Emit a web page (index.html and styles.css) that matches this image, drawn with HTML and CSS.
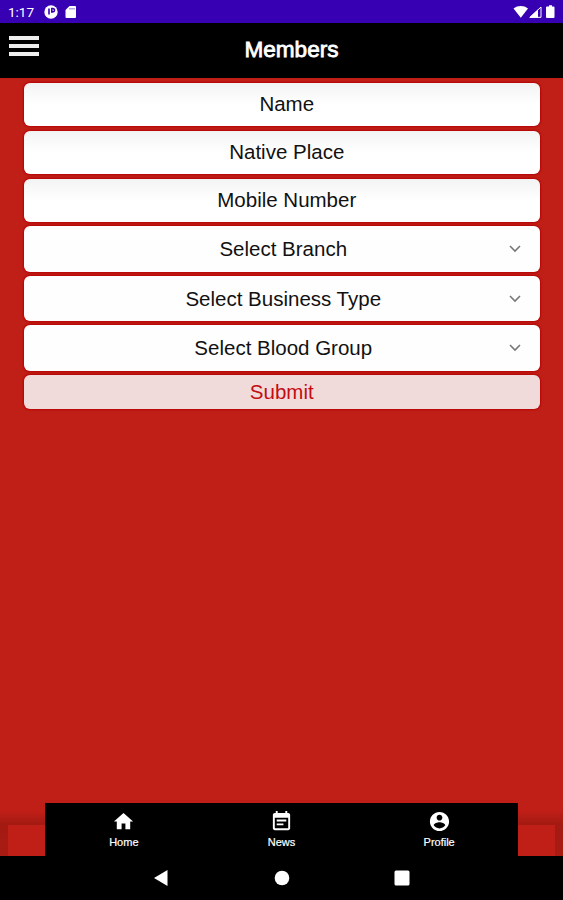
FILE: index.html
```
<!DOCTYPE html>
<html lang="en">

<head>
    <meta charset="UTF-8">
    <meta name="viewport" content="width=device-width, initial-scale=1.0">
    <title>Members</title>
    <link rel="stylesheet" href="styles.css">
</head>

<body>

    <div class="status-bar">
        <span class="clock">1:17</span>
        <svg class="status-app" width="14" height="14" viewBox="0 0 14 14">
            <circle cx="7" cy="7" r="6.7" fill="#fff" />
            <path d="M5 3.500v6M7.800 3.500h1a1.700 1.700 0 0 1 0 3.400h-1z" fill="none" stroke="#3700b3" stroke-width="1.600" />
        </svg>
        <svg class="status-card" width="12" height="14" viewBox="0 0 12 14">
            <path d="M4.500 1H10a1 1 0 0 1 1 1v10a1 1 0 0 1-1 1H1.500a1 1 0 0 1-1-1V5z" fill="#fff" />
            <path d="M5 3v1.500M7 3v1.500M9 3v1.500" stroke="#3700b3" stroke-width=".7" />
        </svg>
        <svg class="status-right" width="44" height="14" viewBox="0 0 44 14">
            <path d="M0.500 3.500C4.500 0.200 11 0.200 15 3.500L7.800 12.800z" fill="#fff" />
            <path d="M25 4.500v8.300H16z" fill="#fff" />
            <path d="M28 2v10.300H17z" fill="none" stroke="#fff" stroke-width="1" />
            <path d="M36 1.500V.3h3v1.200h1.500a1 1 0 0 1 1 1V12a1 1 0 0 1-1 1h-6.500a1 1 0 0 1-1-1V2.500a1 1 0 0 1 1-1z" fill="#fff" />
        </svg>
    </div>

    <header class="header">
        <button class="menu-button" aria-label="Menu">
            <span class="menu-line"></span>
            <span class="menu-line"></span>
            <span class="menu-line"></span>
        </button>
        <h1>Members</h1>
    </header>

    <main class="content">
        <form class="search-form">
            <input type="text" class="field" placeholder="Name">
            <input type="text" class="field" placeholder="Native Place">
            <input type="text" class="field" placeholder="Mobile Number">
            <div class="select">
                Select Branch
                <svg class="chevron" viewBox="0 0 12 8"><path d="M1 1l5 5 5-5" /></svg>
            </div>
            <div class="select">
                Select Business Type
                <svg class="chevron" viewBox="0 0 12 8"><path d="M1 1l5 5 5-5" /></svg>
            </div>
            <div class="select">
                Select Blood Group
                <svg class="chevron" viewBox="0 0 12 8"><path d="M1 1l5 5 5-5" /></svg>
            </div>
            <button type="button" class="submit">Submit</button>
        </form>

        <div class="tab-area">
            <nav class="tabs">
                <a class="tab">
                    <svg viewBox="0 0 24 24"><path d="M10 20v-6h4v6h5v-8h3L12 3 2 12h3v8z" /></svg>
                    <span>Home</span>
                </a>
                <a class="tab">
                    <svg viewBox="0 0 24 24"><path d="M17 10H7v2h10v-2zm2-7h-1V1h-2v2H8V1H6v2H5c-1.110 0-2 .9-2 2v14c0 1.100.89 2 2 2h14c1.100 0 2-.9 2-2V5c0-1.100-.9-2-2-2zm0 16H5V8h14v11zm-5-5H7v2h7v-2z" /></svg>
                    <span>News</span>
                </a>
                <a class="tab">
                    <svg viewBox="0 0 24 24"><path d="M12 2C6.480 2 2 6.480 2 12s4.480 10 10 10 10-4.480 10-10S17.520 2 12 2zm0 3c1.660 0 3 1.340 3 3s-1.340 3-3 3-3-1.340-3-3 1.340-3 3-3zm0 14.200c-2.500 0-4.710-1.280-6-3.220.03-1.990 4-3.080 6-3.080 1.990 0 5.970 1.090 6 3.080-1.290 1.940-3.500 3.220-6 3.220z" /></svg>
                    <span>Profile</span>
                </a>
            </nav>
        </div>
    </main>

    <div class="system-nav">
        <svg width="16" height="16" viewBox="0 0 16 16"><path d="M1 8l13.500-8v16z" /></svg>
        <svg width="16" height="16" viewBox="0 0 16 16"><circle cx="8" cy="8" r="7.300" /></svg>
        <svg width="16" height="16" viewBox="0 0 16 16"><rect x=".5" y=".5" width="15" height="15" rx="1.500" /></svg>
    </div>

</body>

</html>
```

FILE: styles.css
```
* {
    box-sizing: border-box;
}

body {
    font-family: "Liberation Sans", Arial, sans-serif;
    background-color: #c01f17;
    margin: 0;
    height: 900px;
    display: flex;
    flex-direction: column;
    overflow: hidden;
}

/* Android status bar */
.status-bar {
    display: flex;
    align-items: center;
    height: 23px;
    padding: 0 6px 0 8px;
    background-color: #3700b3;
    color: #fff;
}

.clock {
    width: 36px;
    font-family: Roboto, sans-serif;
    font-size: 13.5px;
    line-height: 23px;
    padding-top: 2px;
}

.status-card {
    margin-left: 7px;
}

.status-right {
    margin-left: auto;
}

.header {
    display: grid;
    grid-template-columns: 48px 1fr 28px;
    height: 55px;
    background-color: #000;
}

.menu-button {
    display: flex;
    flex-direction: column;
    gap: 4px;
    padding: 13px 0 0 9px;
    background: none;
    border: 0;
}

.menu-line {
    width: 30px;
    height: 4px;
    background-color: #eee;
}

h1 {
    margin: 0;
    color: #fff;
    font-size: 22.6px;
    font-weight: normal;
    line-height: 54px;
    text-align: center;
    -webkit-text-stroke: 0.8px #fff;
}

.content {
    flex: 1;
    display: flex;
    flex-direction: column;
    justify-content: space-between;
}

.search-form {
    display: flex;
    flex-direction: column;
    gap: 4px;
    padding: 5px 23px 0 23.5px;
}

.field,
.select,
.submit {
    width: 100%;
    border: 0;
    border-radius: 6px;
    box-shadow: 0 0 2px 1px #b50505;
    color: #111;
    font-family: inherit;
    font-size: 20.5px;
    text-align: center;
}

.field {
    height: 43px;
    margin-bottom: 1px;
    padding: 0 0 1px 10px;
    background: linear-gradient(#f3f3f4, #fff 50%);
}

.field::placeholder {
    color: #111;
    opacity: 1;
}

.select {
    position: relative;
    height: 45.7px;
    padding-left: 3px;
    background-color: #fefefe;
    line-height: 45px;
}

.field + .select {
    margin-top: -1px;
}

.chevron {
    position: absolute;
    right: 19px;
    top: 19px;
    width: 12px;
    height: 8px;
    fill: none;
    stroke: #777;
    stroke-width: 1.6;
}

.submit {
    height: 34px;
    padding: 0;
    background-color: #f1dada;
    color: #c20d12;
}

/* Shadowed panel behind the tabs */
.tab-area {
    height: 53px;
    padding: 0 45px;
    background:
        linear-gradient(#c01f17, #c01f17) 8px 22px / 547px 31px no-repeat,
        linear-gradient(#c01f17 8px, #a31a12 21px, #a91b13);
}

.tabs {
    display: grid;
    grid-template-columns: repeat(3, 1fr);
    height: 53px;
    background-color: #000;
}

.tab {
    display: flex;
    flex-direction: column;
    align-items: center;
    padding-top: 7px;
    color: #fff;
    font-size: 11px;
    line-height: 13px;
    -webkit-text-stroke: 0.2px #fff;
}

.tab svg {
    width: 23px;
    height: 23px;
    margin-bottom: 3px;
    fill: #fff;
    stroke: none;
}

/* Android back / home / recents */
.system-nav {
    display: flex;
    justify-content: center;
    gap: 104.5px;
    height: 44px;
    padding-top: 14px;
    background-color: #000;
    fill: #fff;
}
```
